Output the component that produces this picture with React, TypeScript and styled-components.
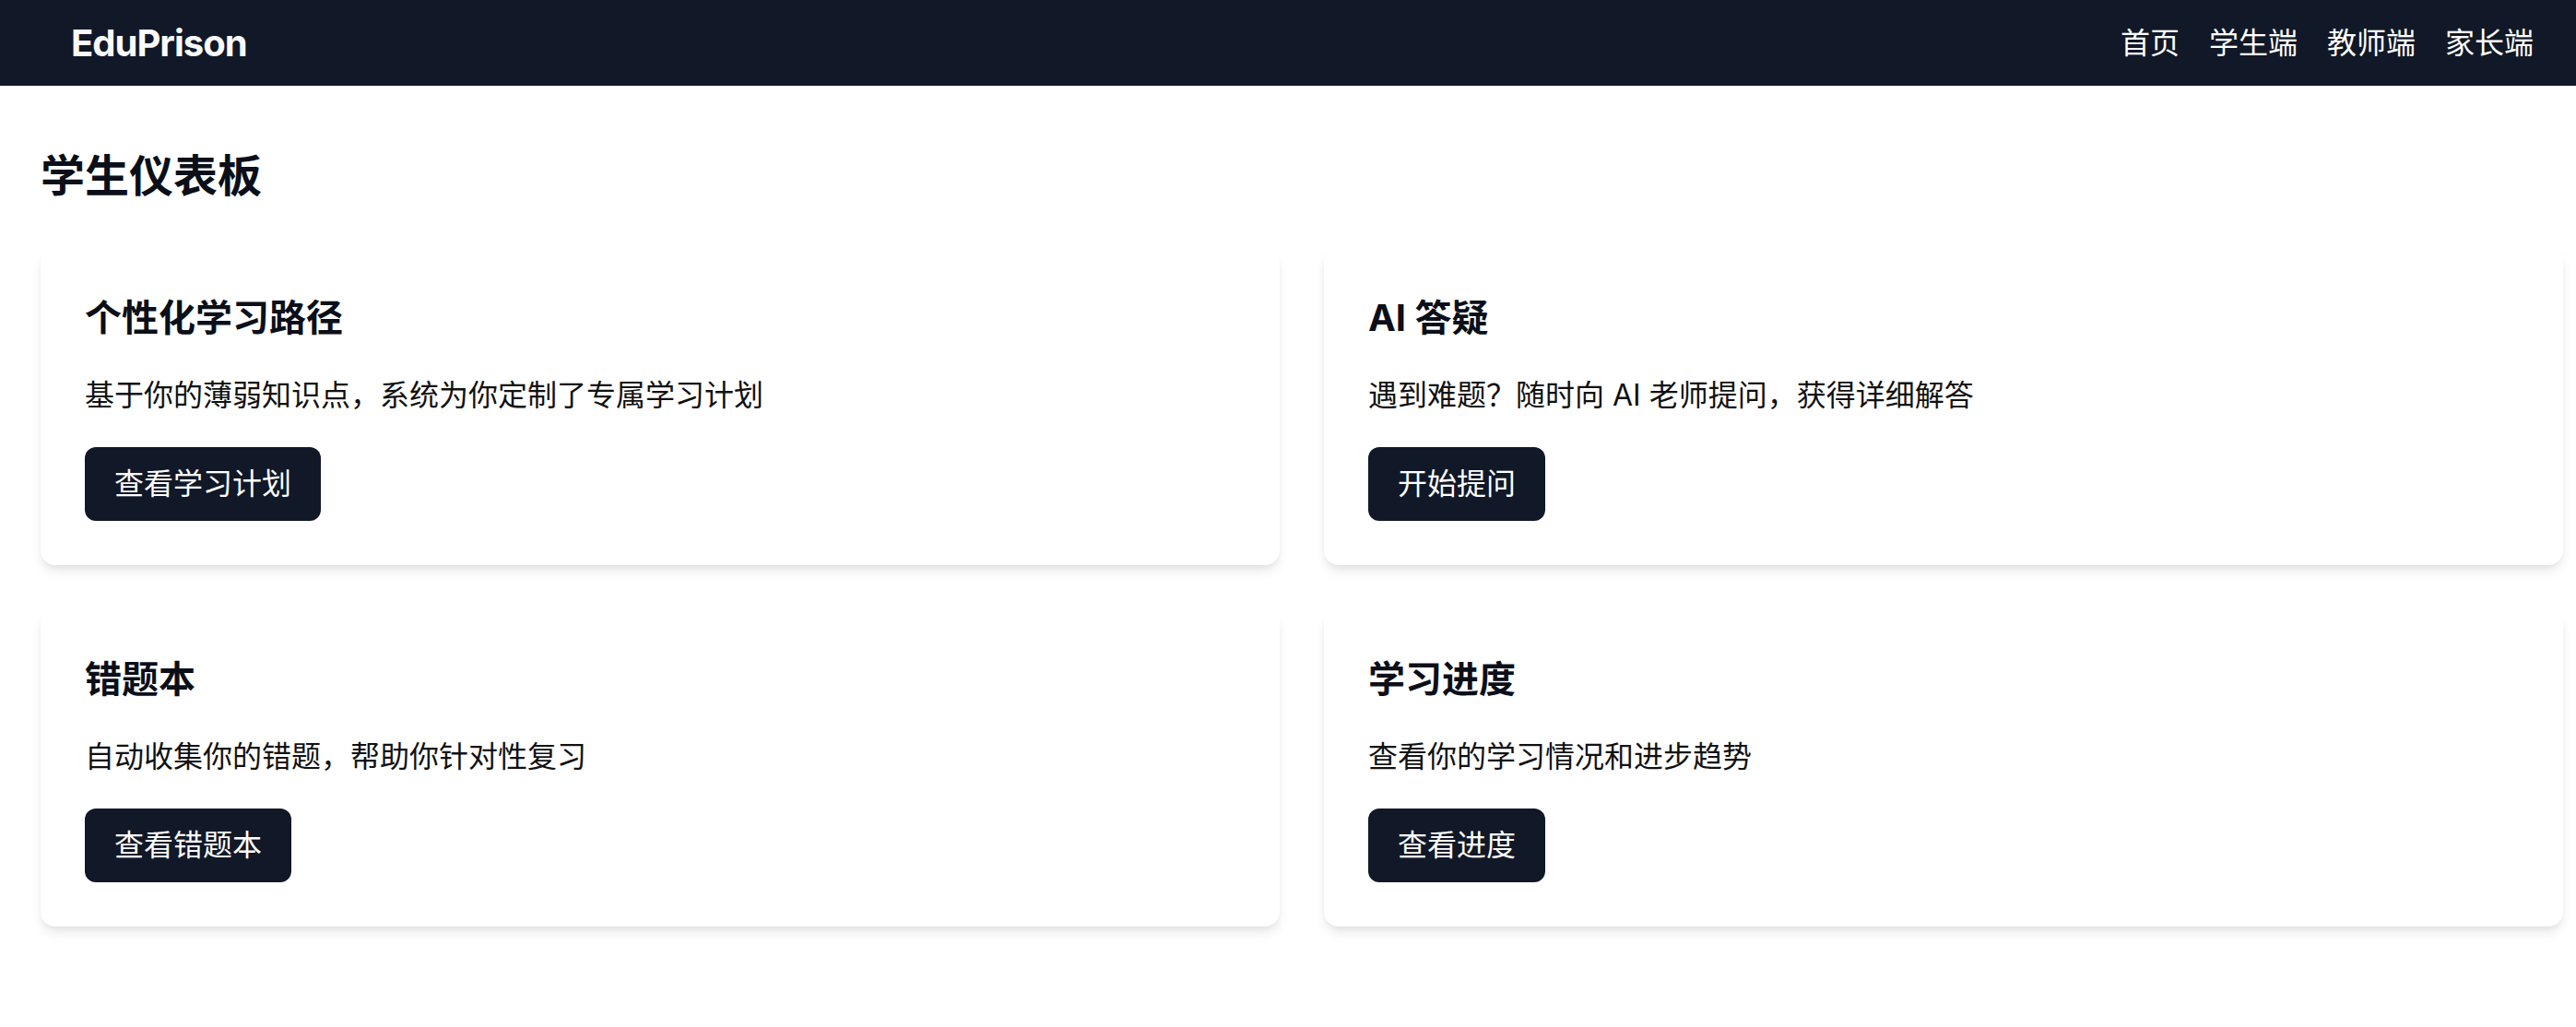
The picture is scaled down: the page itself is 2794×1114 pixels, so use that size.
import React from 'react';
import styled, { createGlobalStyle } from 'styled-components';

const GlobalStyle = createGlobalStyle`
    html, body {
        margin: 0;
        padding: 0;
        background: #ffffff;
    }

    body {
        font-family: Inter, 'Noto Sans CJK SC', sans-serif;
        color: #111827;
    }
`;

const NavBar = styled.header`
    display: flex;
    align-items: center;
    justify-content: space-between;
    height: 93px;
    padding: 0 46px 0 77px;
    background: #111827;
    box-sizing: border-box;
`;

const Logo = styled.a`
    font-size: 40px;
    line-height: 56px;
    font-weight: 700;
    letter-spacing: -1px;
    color: #f9fafb;
    text-decoration: none;
`;

const NavLinks = styled.nav`
    display: flex;
    gap: 32px;
`;

const NavLink = styled.a`
    font-size: 32px;
    line-height: 48px;
    color: #ffffff;
    text-decoration: none;
    cursor: pointer;
`;

const Main = styled.main`
    padding: 66px 14px 48px 44px;
`;

const PageTitle = styled.h1`
    margin: 0 0 46px;
    font-size: 48px;
    line-height: 64px;
    font-weight: 700;
    color: #0b0f19;
`;

const CardGrid = styled.div`
    display: grid;
    grid-template-columns: repeat(2, 1fr);
    gap: 48px;
`;

const Card = styled.section`
    padding: 48px;
    background: #ffffff;
    border-radius: 16px;
    box-shadow: 0 8px 14px -2px rgba(0, 0, 0, 0.09), 0 4px 8px -4px rgba(0, 0, 0, 0.09);
`;

const CardTitle = styled.h2`
    margin: 0 0 32px;
    font-size: 40px;
    line-height: 56px;
    font-weight: 700;
    color: #0b0f19;
`;

const CardText = styled.p`
    margin: 0 0 32px;
    font-size: 32px;
    line-height: 48px;
    color: #111111;
`;

const ActionButton = styled.button`
    padding: 16px 32px;
    border: none;
    border-radius: 12px;
    background: #111827;
    color: #ffffff;
    font-family: inherit;
    font-size: 32px;
    line-height: 48px;
    cursor: pointer;
`;

const features = [
    {
        title: '个性化学习路径',
        text: '基于你的薄弱知识点，系统为你定制了专属学习计划',
        action: '查看学习计划',
    },
    {
        title: 'AI 答疑',
        text: '遇到难题？随时向 AI 老师提问，获得详细解答',
        action: '开始提问',
    },
    {
        title: '错题本',
        text: '自动收集你的错题，帮助你针对性复习',
        action: '查看错题本',
    },
    {
        title: '学习进度',
        text: '查看你的学习情况和进步趋势',
        action: '查看进度',
    },
];

const App = (): JSX.Element => {
    return (
        <>
            <GlobalStyle />
            <NavBar>
                <Logo href="#">EduPrison</Logo>
                <NavLinks>
                    <NavLink>首页</NavLink>
                    <NavLink>学生端</NavLink>
                    <NavLink>教师端</NavLink>
                    <NavLink>家长端</NavLink>
                </NavLinks>
            </NavBar>
            <Main>
                <PageTitle>学生仪表板</PageTitle>
                <CardGrid>
                    {features.map((f) => (
                        <Card key={f.title}>
                            <CardTitle>{f.title}</CardTitle>
                            <CardText>{f.text}</CardText>
                            <ActionButton>{f.action}</ActionButton>
                        </Card>
                    ))}
                </CardGrid>
            </Main>
        </>
    );
};

export default App;
